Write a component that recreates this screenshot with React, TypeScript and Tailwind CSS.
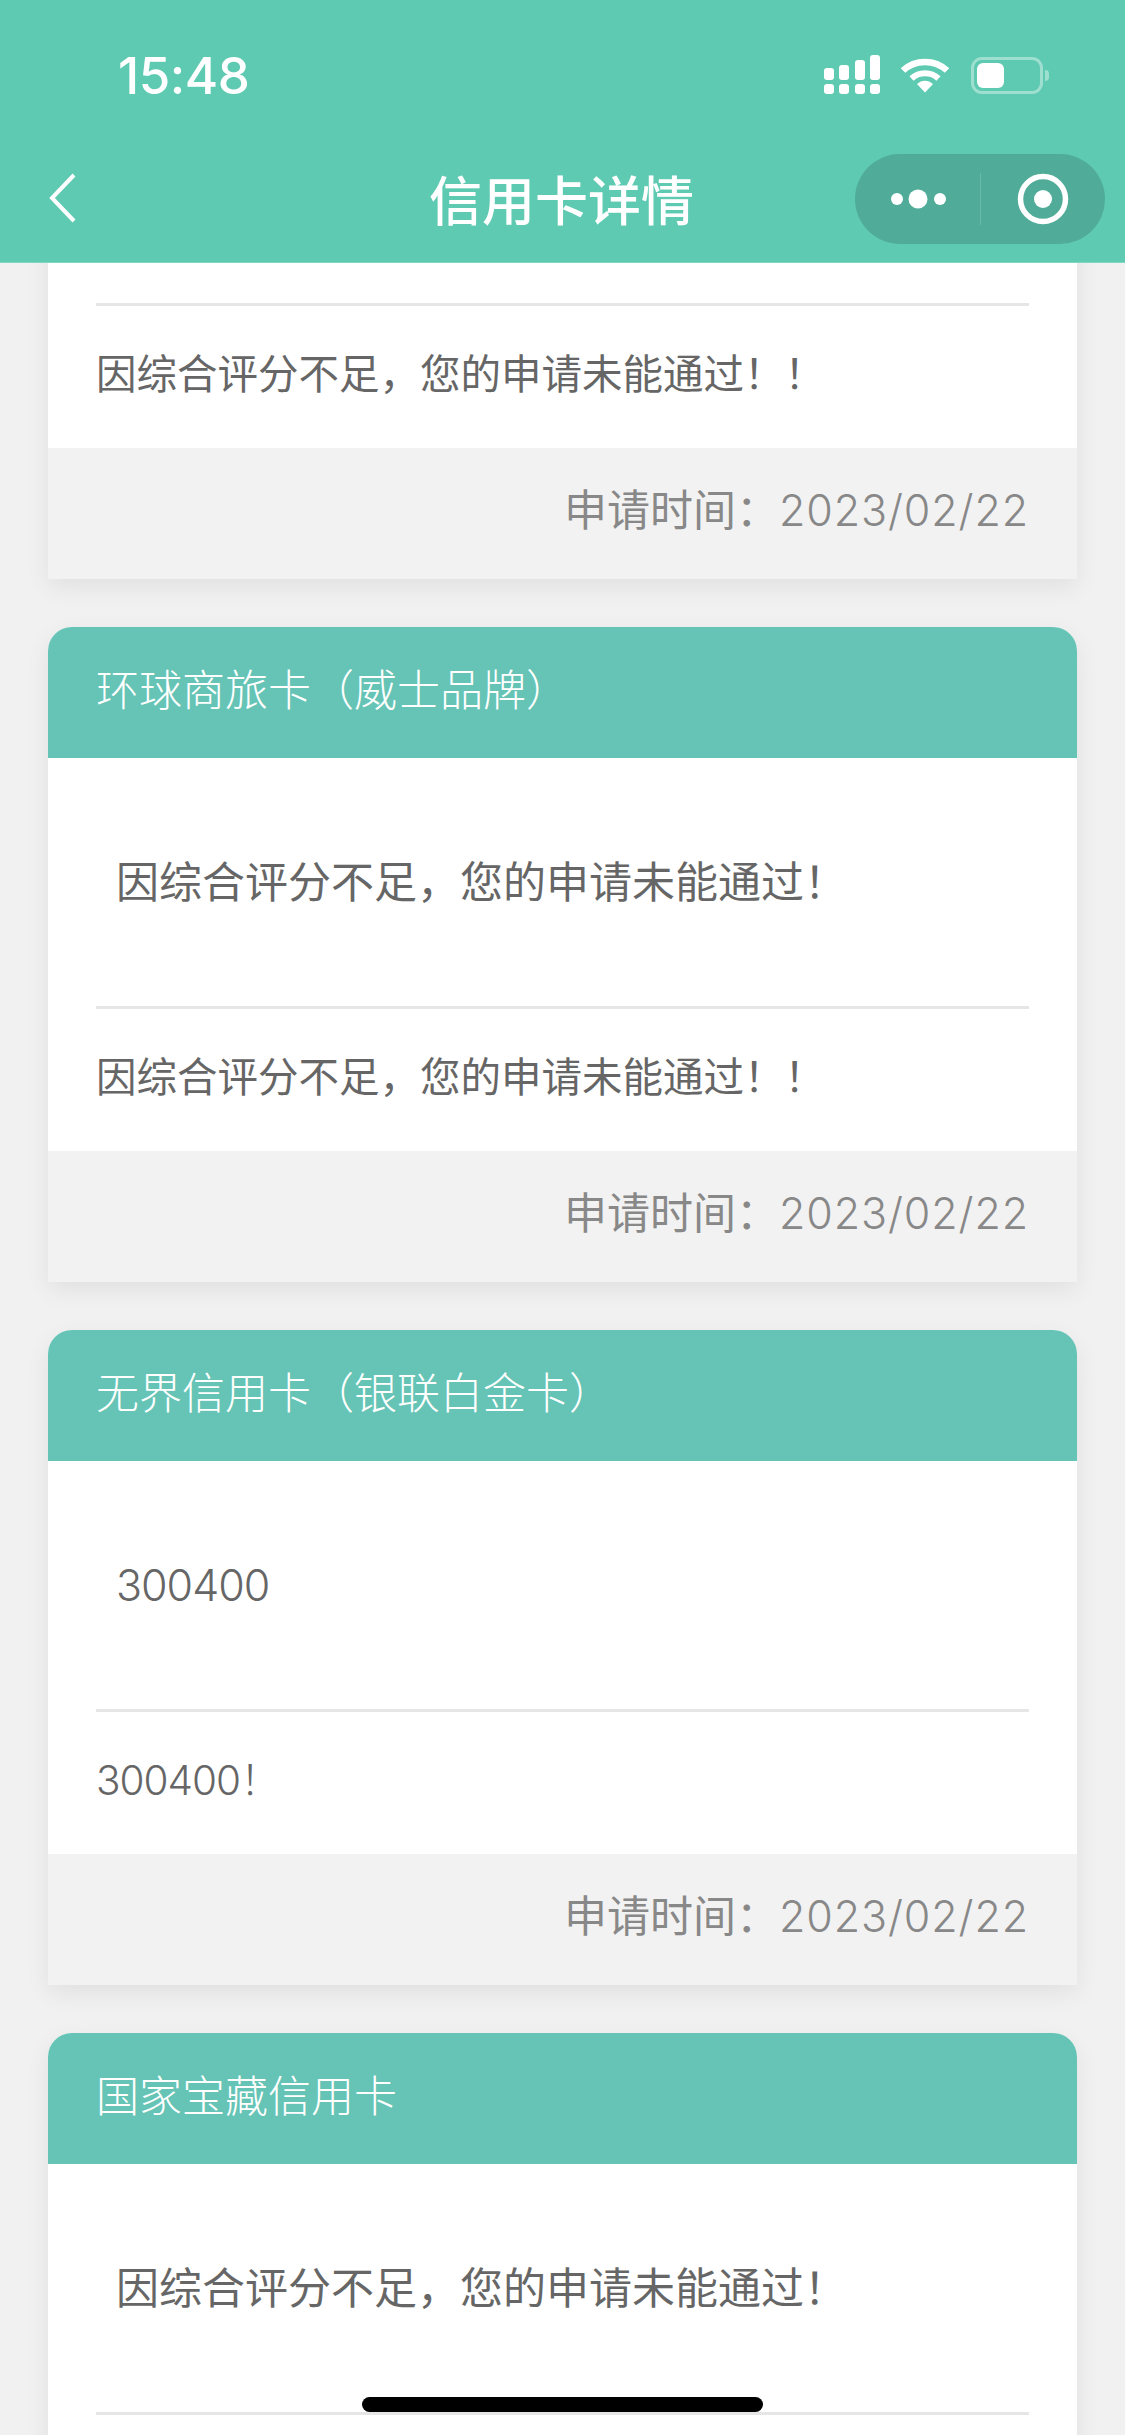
const FONT = "font-['Inter','Noto_Sans_CJK_SC',sans-serif]";

const REJECT = "因综合评分不足\uFF0C您的申请未能通过\uFF01";

const cards = [
  { title: "", message: "", note: REJECT + "\uFF01", showTime: true },
  { title: "环球商旅卡\uFF08威士品牌\uFF09", message: REJECT, note: REJECT + "\uFF01", showTime: true },
  { title: "无界信用卡\uFF08银联白金卡\uFF09", message: "300400", note: "300400\uFF01", showTime: true, numeric: true },
  { title: "国家宝藏信用卡", message: REJECT, note: "", showTime: false },
];

function StatusIcons() {
  return (
    <div className="flex items-center">
      <svg width="57" height="40" viewBox="0 0 57 40" fill="white">
        <rect x="0" y="29" width="10" height="10" rx="3" />
        <rect x="15" y="29" width="10" height="10" rx="3" />
        <rect x="31" y="29" width="10" height="10" rx="3" />
        <rect x="46" y="29" width="10" height="10" rx="3" />
        <rect x="0" y="13" width="10" height="12" rx="3" />
        <rect x="15" y="10" width="10" height="15" rx="3" />
        <rect x="31" y="5" width="10" height="20" rx="3" />
        <rect x="46" y="0" width="10" height="25" rx="3" />
      </svg>
      <svg className="ml-[20px]" width="48" height="36" viewBox="0 0 48 36" fill="none">
        <path d="M2 13.5C14 2 34 2 46 13.5" stroke="white" strokeWidth="6.5" />
        <path d="M10.5 21.5C18 14.5 30 14.5 37.5 21.5" stroke="white" strokeWidth="6" />
        <path d="M16 27C20.5 22.5 27.5 22.5 32 27L24 35.5Z" fill="white" />
      </svg>
      <div className="ml-[22px] flex items-center">
        <div className="h-[37px] w-[72px] rounded-[11px] border-[3px] border-white/40 p-[3px]">
          <div className="h-full w-[27px] rounded-[6px] bg-white" />
        </div>
        <div className="ml-[2px] h-[11px] w-[4px] rounded-r-full bg-white/40" />
      </div>
    </div>
  );
}

function Capsule() {
  return (
    <div className="flex h-[90px] w-[250px] items-center rounded-full bg-[#50AC98]">
      <div className="flex h-full flex-1 items-center justify-center pl-[3px]">
        <svg width="56" height="20" viewBox="0 0 56 20" fill="white">
          <circle cx="6" cy="10" r="6" />
          <circle cx="27" cy="10" r="9.5" />
          <circle cx="49" cy="10" r="6" />
        </svg>
      </div>
      <div className="h-[52px] w-px bg-white/15" />
      <div className="flex h-full w-[124px] items-center justify-center">
        <svg width="52" height="52" viewBox="0 0 52 52" fill="none">
          <circle cx="26" cy="26" r="22.5" stroke="white" strokeWidth="5.5" />
          <circle cx="26" cy="26" r="9" fill="white" />
        </svg>
      </div>
    </div>
  );
}

function NavBar() {
  return (
    <header className="absolute inset-x-0 top-0 z-10 h-[263px] border-b border-[#7FD6C2] bg-[#5ECAB1] text-white">
      <div className="flex h-[150px] items-center justify-between pl-[118px] pr-[76px]">
        <span className="text-[51px] font-medium leading-none tracking-[-0.5px]">15:48</span>
        <StatusIcons />
      </div>
      <div className="relative flex h-[112px] items-center justify-center pb-[8px]">
        <svg className="absolute left-[48px] top-[22px]" width="30" height="52" viewBox="0 0 30 52" fill="none">
          <path d="M26 3L4 26L26 49" stroke="white" strokeWidth="4" />
        </svg>
        <h1 className="pr-[2px] text-[53px] font-medium leading-none">信用卡详情</h1>
        <div className="absolute right-[20px] top-[4px]">
          <Capsule />
        </div>
      </div>
    </header>
  );
}

type CardProps = { title: string; message: string; note: string; showTime: boolean; numeric?: boolean };

function Card({ title, message, note, showTime, numeric }: CardProps) {
  const digits = numeric ? "font-light tracking-[-1px]" : "";
  return (
    <section className="overflow-hidden rounded-t-[24px] bg-white shadow-[0_8px_24px_rgba(0,0,0,0.07)]">
      <div className="flex h-[131px] items-center bg-[#65C4B5] px-12 pb-[4px] text-[43px] font-light text-white">{title}</div>
      <div className={`mx-12 flex h-[251px] items-center border-b-[3px] border-[#E6E6E6] px-[20px] text-[43px] text-[#666666] ${digits}`}>
        {message}
      </div>
      <div className={`flex h-[142px] items-center px-12 pb-[3px] text-[40.5px] text-[#666666] ${digits}`}>{note}</div>
      <div className="flex h-[131px] items-center justify-end bg-[#F2F2F2] px-12 pb-[6px] text-[43px] text-[#888888]">
        {showTime && (
          <span>
            申请时间{"\uFF1A"}
            <span className="font-light tracking-[0.9px]">2023/02/22</span>
          </span>
        )}
      </div>
    </section>
  );
}

export default function App() {
  return (
    <div className={`relative h-[2435px] w-[1125px] overflow-hidden bg-[#F1F1F1] ${FONT}`}>
      <NavBar />
      <main className="-mt-[76px] flex flex-col gap-[48px] px-12">
        {cards.map((card, i) => (
          <Card key={i} {...card} />
        ))}
      </main>
      <div className="absolute bottom-[23px] left-[362px] h-[15px] w-[401px] rounded-full bg-black" />
    </div>
  );
}
